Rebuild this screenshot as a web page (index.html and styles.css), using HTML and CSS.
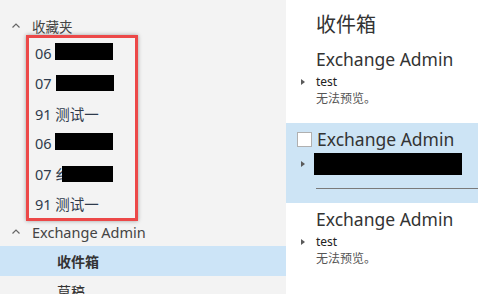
FILE: index.html
```html
<!DOCTYPE html>
<html lang="zh">
<head>
<meta charset="utf-8">
<link rel="stylesheet" href="styles.css">
</head>
<body>
<div class="app">
  <nav class="folders">
    <div class="group-head">
      <svg class="chev" width="8" height="5" viewBox="0 0 8 5"><path d="M0.5 4.5 L4 1 L7.5 4.5" fill="none" stroke="#666" stroke-width="1.2"/></svg>
      <span>收藏夹</span>
    </div>
    <div class="mark">
      <div class="fav"><span>06</span><span class="redact r1"></span></div>
      <div class="fav"><span>07</span><span class="redact r2"></span></div>
      <div class="fav"><span>91 测试一</span></div>
      <div class="fav"><span>06</span><span class="redact r1"></span></div>
      <div class="fav"><span>07 纟</span><span class="redact r5"></span></div>
      <div class="fav"><span>91 测试一</span></div>
    </div>
    <div class="group-head acct">
      <svg class="chev" width="8" height="5" viewBox="0 0 8 5"><path d="M0.5 4.5 L4 1 L7.5 4.5" fill="none" stroke="#666" stroke-width="1.2"/></svg>
      <span>Exchange Admin</span>
    </div>
    <div class="folder selected">收件箱</div>
    <div class="folder">草稿</div>
  </nav>
  <main class="list">
    <h1 class="title">收件箱</h1>
    <div class="msg">
      <div class="sender">Exchange Admin</div>
      <div class="subj"><span class="tri"></span>test</div>
      <div class="preview">无法预览。</div>
    </div>
    <div class="msg sel">
      <div class="sender"><span class="check"></span>Exchange Admin</div>
      <div class="subj"><span class="tri"></span><span class="redact big"></span></div>
      <div class="rule"></div>
    </div>
    <div class="msg">
      <div class="sender">Exchange Admin</div>
      <div class="subj"><span class="tri"></span>test</div>
      <div class="preview">无法预览。</div>
    </div>
  </main>
</div>
</body>
</html>
```
FILE: styles.css
```css
html, body {
  margin: 0;
  padding: 0;
  width: 478px;
  height: 294px;
  overflow: hidden;
  background: #fff;
}
body {
  font-family: "Noto Sans", "Noto Sans CJK SC", sans-serif;
  color: #333;
}
.app {
  display: flex;
  height: 294px;
}
.folders {
  width: 286px;
  flex: none;
  background: #f3f3f3;
  padding-top: 14px;
  box-sizing: border-box;
}
.group-head {
  height: 24px;
  display: flex;
  align-items: center;
  font-size: 13.5px;
  color: #444;
  padding-left: 12px;
}
.group-head .chev {
  margin-right: 12px;
  margin-top: -2px;
}
.group-head.acct {
  font-size: 14.5px;
  margin-top: -1px;
}
.mark {
  margin: -3px 0 0 26px;
  width: 106px;
  border: 3px solid #ec4848;
  box-shadow: 0 0 4px rgba(0,0,0,0.35);
}
.fav {
  height: 30px;
  display: flex;
  align-items: center;
  padding-left: 6px;
  font-size: 14.5px;
  color: #2f3b4c;
}
.redact {
  display: inline-block;
  background: #000;
}
.r1 { width: 58px; height: 17px; margin-left: 3px; margin-top: -4px; }
.r2 { width: 58px; height: 16px; margin-left: 4px; margin-top: 0; }
.r5 { width: 51px; height: 16px; margin-left: -8px; margin-top: 2px; }
.folder {
  height: 30px;
  display: flex;
  align-items: center;
  padding-left: 57px;
  font-size: 14px;
  color: #333;
}
.folder.selected {
  background: #cce4f7;
  font-weight: 700;
  margin-top: 2px;
}
.list {
  flex: 1;
}
.title {
  margin: 0;
  height: 43px;
  box-sizing: border-box;
  padding: 10px 0 0 30px;
  font-size: 20px;
  font-weight: 400;
  line-height: 30px;
  color: #333;
}
.msg {
  height: 80px;
  padding-left: 30px;
  box-sizing: border-box;
}
.msg.sel {
  background: #cde4f5;
}
.sender {
  font-size: 17.5px;
  line-height: 22px;
  padding-top: 5px;
  color: #333;
  display: flex;
  align-items: center;
}
.check {
  width: 13px;
  height: 13px;
  background: #fff;
  border: 1px solid #b0b0b0;
  margin-left: -19px;
  margin-right: 5px;
}
.subj {
  font-size: 12px;
  line-height: 17px;
  height: 17px;
  margin-top: 3px;
  color: #222;
  display: flex;
  align-items: center;
}
.tri {
  width: 0;
  height: 0;
  border-top: 3.5px solid transparent;
  border-bottom: 3.5px solid transparent;
  border-left: 4px solid #5a5a5a;
  margin-left: -15px;
  margin-right: 11px;
}
.preview {
  font-size: 12px;
  line-height: 17px;
  color: #555;
}
.sel .subj {
  height: 22px;
  margin-top: 3px;
}
.redact.big {
  width: 148px;
  height: 22px;
  margin-left: -2px;
}
.rule {
  height: 1px;
  background: #7a7a7a;
  margin-top: 13px;
}
```
